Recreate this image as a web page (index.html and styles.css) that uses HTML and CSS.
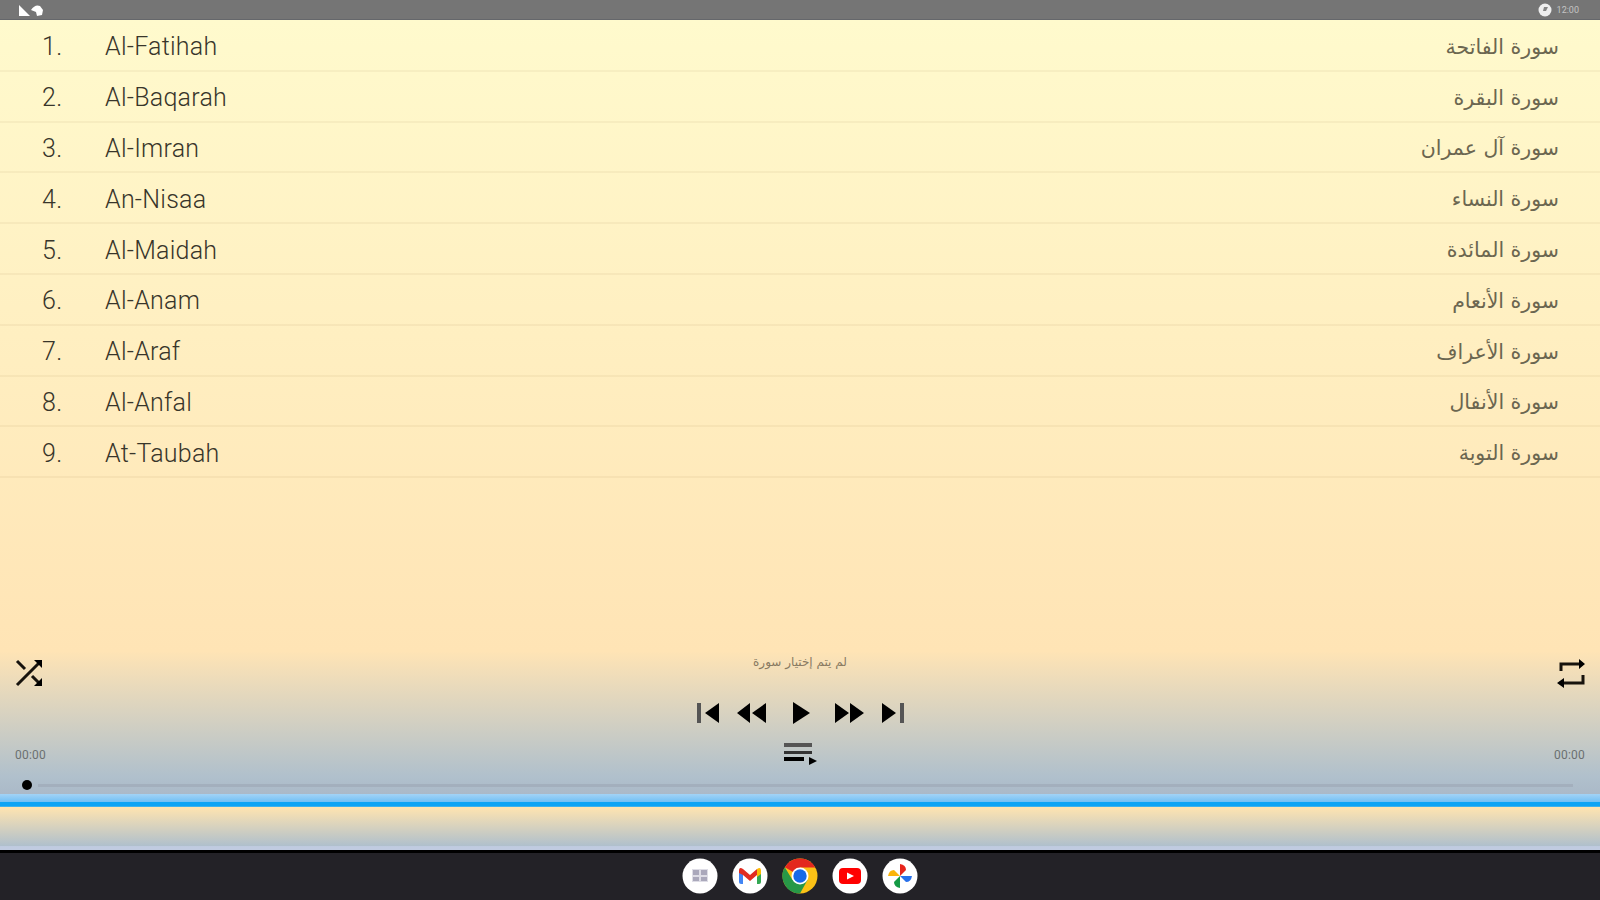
FILE: index.html
```
<!DOCTYPE html>
<html lang="en">
<head>
    <meta charset="UTF-8">
    <title>Quran Player</title>
    <link rel="stylesheet" href="styles.css">
</head>
<body>
    <header class="statusbar">
        <svg class="status-left" width="28" height="12" viewBox="0 0 28 12">
            <path d="M1 0L12 11H1z"/>
            <path d="M13 5Q17-1 22 1L25 5L24 10L19 11L18 7z"/>
        </svg>
        <div class="status-right">
            <svg width="14" height="14" viewBox="0 0 14 14">
                <circle cx="7" cy="7" r="6.5"/>
                <path class="cut" d="M6 4h4L8 8H5z"/>
            </svg>
            <span class="clock">12:00</span>
        </div>
    </header>

    <ul class="surahs">
        <li><span class="num">1.</span><span class="name">Al-Fatihah</span><span class="arabic" lang="ar" dir="rtl">سورة الفاتحة</span></li>
        <li><span class="num">2.</span><span class="name">Al-Baqarah</span><span class="arabic" lang="ar" dir="rtl">سورة البقرة</span></li>
        <li><span class="num">3.</span><span class="name">Al-Imran</span><span class="arabic" lang="ar" dir="rtl">سورة آل عمران</span></li>
        <li><span class="num">4.</span><span class="name">An-Nisaa</span><span class="arabic" lang="ar" dir="rtl">سورة النساء</span></li>
        <li><span class="num">5.</span><span class="name">Al-Maidah</span><span class="arabic" lang="ar" dir="rtl">سورة المائدة</span></li>
        <li><span class="num">6.</span><span class="name">Al-Anam</span><span class="arabic" lang="ar" dir="rtl">سورة الأنعام</span></li>
        <li><span class="num">7.</span><span class="name">Al-Araf</span><span class="arabic" lang="ar" dir="rtl">سورة الأعراف</span></li>
        <li><span class="num">8.</span><span class="name">Al-Anfal</span><span class="arabic" lang="ar" dir="rtl">سورة الأنفال</span></li>
        <li><span class="num">9.</span><span class="name">At-Taubah</span><span class="arabic" lang="ar" dir="rtl">سورة التوبة</span></li>
    </ul>

    <section class="player">
        <div class="side">
            <svg width="28" height="28" viewBox="0 0 28 28">
                <path class="line" d="M2 2L10 10M2 26L24 4M17 17L24 24"/>
                <path d="M19 1h8v8zM27 19v8h-8z"/>
            </svg>
            <span class="time">00:00</span>
        </div>
        <div class="center">
            <div class="now" lang="ar" dir="rtl">لم يتم إختيار سورة</div>
            <div class="controls">
                <svg width="22" height="20" viewBox="0 0 22 20"><path class="soft" d="M0 0h4v20H0z"/><path d="M22 0v20L8 10z"/></svg>
                <div class="transport">
                    <svg width="29" height="20" viewBox="0 0 29 20"><path d="M13 0v20L0 10zM29 0v20L15 10z"/></svg>
                    <svg class="play" width="17" height="22" viewBox="0 0 17 22"><path d="M0 0v22L17 11z"/></svg>
                    <svg width="29" height="20" viewBox="0 0 29 20"><path d="M0 0v20L14 10zM15 0v20L29 10z"/></svg>
                </div>
                <svg width="22" height="20" viewBox="0 0 22 20"><path d="M0 0v20L14 10z"/><path class="soft" d="M18 0h4v20h-4z"/></svg>
            </div>
            <svg class="playlist" width="33" height="24" viewBox="0 0 33 24">
                <path class="soft" d="M0 1h28v4H0z"/>
                <path class="mid" d="M0 9h28v3H0z"/>
                <path d="M0 15h20v4H0zM25 15v8L33 19z"/>
            </svg>
        </div>
        <div class="side right">
            <svg width="28" height="28" viewBox="0 0 28 28">
                <path class="line" d="M4 12V5H24M26 16V24H5"/>
                <path d="M22 0L28 5L22 10zM7 19L0 24L7 29z"/>
            </svg>
            <span class="time">00:00</span>
        </div>
        <div class="seek">
            <span class="thumb"></span>
            <span class="track"></span>
        </div>
    </section>

    <div class="divider"></div>
    <div class="banner"></div>

    <footer class="dock">
        <svg width="36" height="36" viewBox="0 0 36 36">
            <circle cx="18" cy="18" r="17.5" fill="#fff"/>
            <path fill="#dedde6" d="M10 11h16v13H10z"/>
            <path fill="#aaa8bb" d="M11 12h6v5h-6zM19 12h6v5h-6zM11 19h6v4h-6zM19 19h6v4h-6z"/>
        </svg>
        <svg width="36" height="36" viewBox="0 0 36 36">
            <circle cx="18" cy="18" r="17.5" fill="#fff"/>
            <path fill="#4285f4" d="M7 13l4 2v11H9q-2 0-2-2z"/>
            <path fill="#34a853" d="M25 15l4-2v11q0 2-2 2h-2z"/>
            <path fill="#e22b20" d="M7 13q0-5 4-2l7 6 7-6v6l-7 6-7-6-4-2z"/>
            <path fill="#fbbc04" d="M25 11q4-3 4 2v3l-4 3z"/>
        </svg>
        <svg width="36" height="36" viewBox="0 0 36 36">
            <circle cx="18" cy="18" r="17.5" fill="#fbc116"/>
            <path fill="#e3281e" d="M18 18L2.8 9.2A17.5 17.5 0 0 1 33.2 9.5H18z"/>
            <path fill="#279847" d="M2.8 9.2A17.5 17.5 0 0 0 18 35.5L25.5 22 18 18 10.5 22z"/>
            <circle cx="18" cy="18" r="8.5" fill="#fff"/>
            <circle cx="18" cy="18" r="6.7" fill="#1769e8"/>
        </svg>
        <svg width="36" height="36" viewBox="0 0 36 36">
            <circle cx="18" cy="18" r="17.5" fill="#fff"/>
            <rect x="7" y="10" width="22" height="16" rx="4" fill="#f00"/>
            <path fill="#fff" d="M15 14.5v7l7-3.5z"/>
        </svg>
        <svg width="36" height="36" viewBox="0 0 36 36">
            <circle cx="18" cy="18" r="17.5" fill="#fff"/>
            <path fill="#e8251c" d="M18 6Q24 7 24 12L18 18z"/>
            <path fill="#2870ea" d="M30 18Q29 24 24 24L18 18z"/>
            <path fill="#149a45" d="M18 30Q12 29 12 24L18 18z"/>
            <path fill="#fbb50b" d="M6 18Q7 12 12 12L18 18z"/>
        </svg>
    </footer>
</body>
</html>
```

FILE: styles.css
```
* {
    box-sizing: border-box;
}
body {
    margin: 0;
    height: 900px;
    display: flex;
    flex-direction: column;
    overflow: hidden;
    font-family: Roboto, "DejaVu Sans", sans-serif;
    background: #232227;
}
svg {
    display: block;
    flex: none;
    overflow: visible;
}
.statusbar {
    height: 20px;
    padding: 0 21px 0 18px;
    display: flex;
    justify-content: space-between;
    align-items: center;
    background: #757575;
    border-bottom: 1px solid #65676b;
    fill: #fff;
}
.status-left {
    margin-top: 2px;
}
.status-right {
    display: flex;
    align-items: center;
    gap: 5px;
    fill: #eee;
}
.cut {
    fill: #858585;
}
.clock {
    font-size: 9px;
    color: #c4c4c4;
}
.surahs {
    list-style: none;
    margin: 0;
    padding: 1px 0 0;
    height: 631px;
    background: linear-gradient(#fffacd, #ffe4b5);
}
.surahs li {
    display: flex;
    align-items: center;
    height: 50.8px;
    padding: 3px 41px 0 42px;
    border-bottom: 2px solid rgba(120, 90, 40, 0.06);
    font-size: 25px;
    font-weight: 300;
    color: #38352a;
}
.num {
    width: 63px;
    letter-spacing: 0.5px;
}
.name {
    flex: 1;
    letter-spacing: 0.25px;
}
.arabic {
    font-family: "DejaVu Sans", sans-serif;
    font-size: 20.5px;
    font-weight: 400;
    color: #6b6650;
}
.player {
    height: 143px;
    display: grid;
    grid-template-columns: 1fr 220px 1fr;
    grid-template-rows: 122px 21px;
    background: linear-gradient(#ffe4b5, #b0c0cc 88%, #abb9c8);
}
.side {
    display: flex;
    flex-direction: column;
    justify-content: space-between;
    padding: 8px 16px 11px 15px;
}
.right {
    align-items: flex-end;
    padding-right: 15px;
}
.line {
    fill: none;
    stroke: #17130d;
    stroke-width: 3;
}
.time {
    font-size: 12px;
    line-height: 14px;
    letter-spacing: 0.2px;
    color: #6b7070;
}
.center {
    display: flex;
    flex-direction: column;
    align-items: center;
}
.now {
    height: 31px;
    padding-top: 3px;
    font-family: "DejaVu Sans", sans-serif;
    font-size: 12px;
    line-height: 16px;
    color: #887a62;
    white-space: nowrap;
}
.controls {
    width: 207px;
    height: 60px;
    padding-top: 1px;
    display: flex;
    align-items: center;
    justify-content: space-between;
}
.transport {
    display: flex;
    align-items: center;
    gap: 25px;
}
.play {
    margin-left: 2px;
}
.soft {
    fill: #555;
}
.mid {
    fill: #333;
}
.seek {
    grid-column: 1 / -1;
    display: flex;
    align-items: center;
    gap: 6px;
    padding: 4px 27px 0 22px;
    height: 20px;
}
.thumb {
    width: 10px;
    height: 10px;
    border-radius: 50%;
    background: #000;
}
.track {
    flex: 1;
    height: 3px;
    background: #a3afbd;
}
.divider {
    height: 13px;
    background: linear-gradient(#a3d3f6, #73c0f5 60%, #0ca4f5 65%, #0ca4f5 90%, #5db9e8);
}
.banner {
    height: 43px;
    background: linear-gradient(#ffe4b0, #b0c0cc 90%, #c0cbe0 92%, #c0cbe0);
}
.dock {
    flex: 1;
    padding-bottom: 2px;
    border-top: 3px solid #000;
    display: flex;
    align-items: center;
    justify-content: center;
    gap: 14px;
    background: #232227;
}
```
